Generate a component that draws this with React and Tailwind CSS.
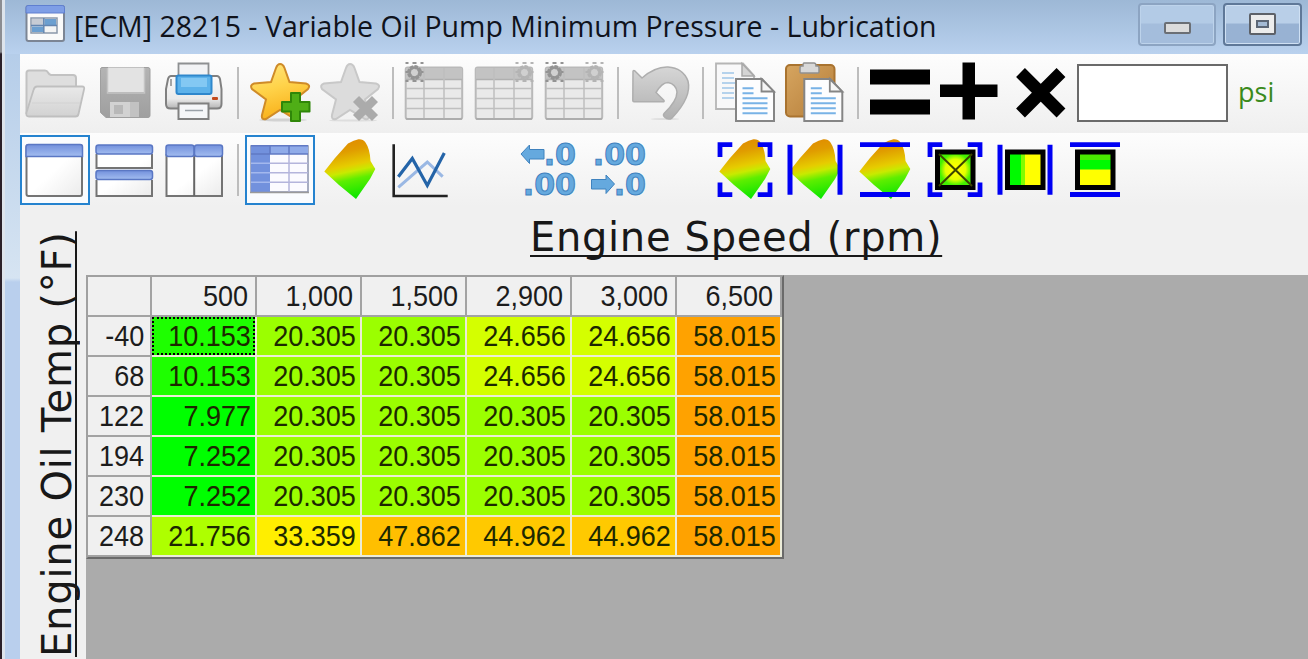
import React from "react";

const Icon = ({ children }) => (
  <svg className="block h-[70px] w-[70px] shrink-0" viewBox="0 0 70 70" fill="none">
    {children}
  </svg>
);

const Separator = () => (
  <div className="flex h-[70px] w-[15px] shrink-0 items-center justify-center">
    <div className="h-[52px] w-[2px] bg-[#bdbdbd]" />
  </div>
);

const Defs = () => (
  <svg className="absolute h-0 w-0">
    <defs>
      <linearGradient id="silver" x1="0" y1="0" x2="0" y2="1">
        <stop offset="0" stopColor="#e9e9e9" />
        <stop offset="1" stopColor="#d2d2d2" />
      </linearGradient>
      <linearGradient id="steel" x1="0" y1="0" x2="0" y2="1">
        <stop offset="0" stopColor="#b4b4b4" />
        <stop offset="1" stopColor="#9f9f9f" />
      </linearGradient>
      <linearGradient id="undo" x1="0" y1="0" x2="0" y2="1">
        <stop offset="0" stopColor="#d6d6d6" />
        <stop offset="1" stopColor="#b0b0b0" />
      </linearGradient>
      <linearGradient id="gold" x1="0" y1="0" x2="0.3" y2="1">
        <stop offset="0" stopColor="#ffe680" />
        <stop offset="0.5" stopColor="#ffd34a" />
        <stop offset="1" stopColor="#f9b21c" />
      </linearGradient>
      <linearGradient id="blueCap" x1="0" y1="0" x2="0" y2="1">
        <stop offset="0" stopColor="#7290dc" />
        <stop offset="1" stopColor="#a3bdf0" />
      </linearGradient>
      <linearGradient id="pane" x1="0" y1="0" x2="1" y2="1">
        <stop offset="0.5" stopColor="#ffffff" />
        <stop offset="1" stopColor="#ebebeb" />
      </linearGradient>
      <linearGradient id="printer" x1="0" y1="0" x2="0" y2="1">
        <stop offset="0" stopColor="#fafafa" />
        <stop offset="0.7" stopColor="#eaeaea" />
        <stop offset="1" stopColor="#b5b5b5" />
      </linearGradient>
      <linearGradient id="board" x1="0" y1="0" x2="1" y2="1">
        <stop offset="0" stopColor="#d6a560" />
        <stop offset="1" stopColor="#b57d38" />
      </linearGradient>
      <linearGradient id="surface" gradientUnits="userSpaceOnUse" x1="34" y1="3" x2="47" y2="64">
        <stop offset="0" stopColor="#e08a00" />
        <stop offset="0.2" stopColor="#e09c00" />
        <stop offset="0.43" stopColor="#e6cc00" />
        <stop offset="0.53" stopColor="#c8ea00" />
        <stop offset="0.66" stopColor="#5eee00" />
        <stop offset="1" stopColor="#00e400" />
      </linearGradient>
      <radialGradient id="target">
        <stop offset="0.15" stopColor="#ffff00" />
        <stop offset="0.55" stopColor="#e4ff00" />
        <stop offset="0.85" stopColor="#44f000" />
      </radialGradient>
    </defs>
  </svg>
);

const STAR =
  "M35 6 Q38 6 39.500 10 L44.500 24 L61 25.500 Q66 27 63 31 L50 41.500 L54 58 Q54 62 50 61 L35 52 L21 61 Q16 62 17 57 L21 41.500 L7 31 Q4.500 27 9 25.500 L26 24 L31 10 Q32.500 6 35 6Z";

const FolderIcon = () => (
  <Icon>
    <path d="M6.500 56V15q0-2.500 2.500-2.500h16q2 0 3 2t3 2.500h22q3 0 3 3v9" fill="#dedede" stroke="#c2c2c2" strokeWidth="2" />
    <path d="M17 28.500h45q3 0 2 3L58.500 56q-.5 2.500-3 2.500H9q-3.500 0-2.500-4L13.500 32q1-3.500 3.500-3.500Z" fill="url(#silver)" stroke="#bfbfbf" strokeWidth="1.800" />
    <path d="M12 45h48" stroke="#d2d2d2" strokeWidth="1" />
  </Icon>
);

const SaveIcon = () => (
  <Icon>
    <path d="M12 9.500h46q2 0 2 2v46q0 2-2 2H16l-5.500-5V11.500q0-2 1.500-2Z" fill="url(#steel)" stroke="#9f9f9f" strokeWidth="1" />
    <path d="M18 9.500h36V34H18Z" fill="#e3e3e3" />
    <path d="M17.500 10v25h37V10" stroke="#c4c4c4" strokeWidth="1.500" />
    <path d="M20 44h29v15H20Z" fill="#d2d2d2" />
    <path d="M24 47h9v9h-9Z" fill="#b8b8b8" />
    <path d="M40 44h9v15h-9Z" fill="#c2c2c2" />
  </Icon>
);

const PrintIcon = () => (
  <Icon>
    <path d="M18.500 22V5.500h30V22Z" fill="#f2f3f5" stroke="#8e9092" strokeWidth="1.800" />
    <path d="M11 18h46q2 0 3 3l1.500 10v15q0 4.500-4.500 4.500H10.500Q6 50.500 6 46V31l2-10q1-3 3-3Z" fill="url(#printer)" stroke="#808080" strokeWidth="2" />
    <rect x="16.500" y="17.500" width="35" height="18.500" rx="2" fill="#5db2ea" stroke="#2e87cc" strokeWidth="2" />
    <path d="M21 20h26v9H21Z" fill="#83c8f3" />
    <path d="M11 21v7" stroke="#a5a5a5" strokeWidth="2" />
    <rect x="52" y="39" width="6" height="3" rx="1" fill="#c34a1c" />
    <path d="M18.500 45.500h30V61h-30Z" fill="#f5f6f8" stroke="#808080" strokeWidth="2" />
    <path d="M25 52.500h18" stroke="#9aa1a8" strokeWidth="1.500" />
  </Icon>
);

const AddFavoriteIcon = () => (
  <Icon>
    <ellipse cx="38" cy="62" rx="24" ry="1.500" fill="#d2d2d2" />
    <path d={STAR} fill="url(#gold)" stroke="#cf8b28" strokeWidth="2" />
    <path d="M46 35h9v9h9.500v9.500H55V63h-9v-9.500h-9V44h9Z" fill="#4fae16" stroke="#2f8608" strokeWidth="2" strokeLinejoin="round" />
  </Icon>
);

const RemoveFavoriteIcon = () => (
  <Icon>
    <ellipse cx="38" cy="62.500" rx="24" ry="1" fill="#dedede" />
    <path d={STAR} fill="#dcdcdc" stroke="#c8c8c8" strokeWidth="2" />
    <path d="M41 41l19 19M60 41L41 60" stroke="#ababab" strokeWidth="8.500" />
  </Icon>
);

const Gear = ({ x, color }) => (
  <g>
    <path d={`M${x - 9} 5h3M${x - 2} 5h4M${x + 6} 5h3M${x - 9} 23h3M${x - 2} 23h4M${x + 6} 23h3M${x - 9} 14h3M${x + 6} 14h3`} stroke={color} strokeWidth="2" />
    <circle cx={x} cy="14.500" r="5.500" fill="#d0d0d0" stroke={color} strokeWidth="4" strokeDasharray="3.200 1" />
    <circle cx={x} cy="14.500" r="5" stroke={color} strokeWidth="2.500" />
  </g>
);

const TableIcon = ({ left, right }) => (
  <Icon>
    <rect x="5.700" y="9.500" width="56.500" height="51.500" rx="2" fill="#e9e9e9" stroke="#b9b9b9" strokeWidth="2" />
    <path d="M6 10h56v11.500H6Z" fill="#c3c3c3" />
    <path d="M6 21.500h56" stroke="#b0b0b0" strokeWidth="1.500" />
    <path d="M6 30.500h56M6 40.500h56M6 50.500h56M24 10v51M44 10v51" stroke="#bfbfbf" strokeWidth="1.500" />
    <path d="M6 61h56" stroke="#a9a9a9" strokeWidth="1.500" />
    {left && <Gear x={14.5} color="#939393" />}
    {right && <Gear x={54.5} color="#b4b4b4" />}
  </Icon>
);

const UndoIcon = () => (
  <Icon>
    <ellipse cx="40" cy="61" rx="14" ry="1" fill="#dedede" />
    <path
      d="M8 13.500Q8 12 10 13l7 7Q30 8.500 43 9q15 1 20 14 4 16-16 37-4 2.500-7.500-1-2-2 0-4Q52 43 52 34q-1-8-9-9.500-6 0-12 10l8 8q.5 1.200-1 1.200H9q-1.200 0-1.200-1.200Z"
      fill="url(#undo)" stroke="#aeaeae" strokeWidth="1.500"
    />
  </Icon>
);

const Page = ({ x }) => (
  <g transform={`translate(${x} 0)`}>
    <path d="M1 21h26l12 13v29H1Z" fill="#fdfdfe" stroke="#858585" strokeWidth="2" />
    <path d="M26.500 21v12.500H39Z" fill="#f6f6f6" stroke="#858585" strokeWidth="1.800" />
    <path d="M7.500 30.300h11M7.500 35.300h11M7.500 40.300h25M7.500 45.300h25M7.500 50.300h25M7.500 55.300h25" stroke="#78b2e6" strokeWidth="2" />
  </g>
);

const CopyIcon = () => (
  <Icon>
    <path d="M6 5.500h27l11 12V51H6Z" fill="#f8f8f9" stroke="#b5b5b5" strokeWidth="1.800" />
    <path d="M32 5.500V18h12Z" fill="#d4d4d4" stroke="#a8a8a8" strokeWidth="1.500" />
    <path d="M12 15h12M12 20h12M12 25h14M12 30h12M12 35h12M12 40h12" stroke="#b5d2ec" strokeWidth="2" />
    <Page x={25} />
  </Icon>
);

const PasteIcon = () => (
  <Icon>
    <rect x="6" y="7" width="48.500" height="51.500" rx="4" fill="url(#board)" stroke="#a9732f" strokeWidth="2" />
    <path d="M24 5h10q2 0 2 3h1.500q1.500 0 1.500 2v4q0 1-1 1H21q-1 0-1-1v-4q0-2 1.500-2H23q0-3 1-3Z" fill="#d8d8d8" stroke="#909090" strokeWidth="1.500" />
    <Page x={23.3} />
  </Icon>
);

const EqualsIcon = () => (
  <Icon>
    <path d="M5 11.500h60v15H5ZM5 41.500h60v15H5Z" fill="#000" />
  </Icon>
);

const PlusIcon = () => (
  <Icon>
    <path d="M27.500 4.500h12.500v22h22.500V39H40v22.500H27.500V39H5V26.500h22.500Z" fill="#000" />
  </Icon>
);

const TimesIcon = () => (
  <Icon>
    <path d="M15.500 14.500L56 55M56 14.500L15.500 55" stroke="#000" strokeWidth="12.500" />
  </Icon>
);

const SingleViewIcon = () => (
  <Icon>
    <rect x="6.500" y="10" width="55.500" height="51" rx="2" fill="url(#pane)" stroke="#747474" strokeWidth="2" />
    <path d="M6 21.500V12q0-2.500 2.500-2.500h51.500q2.500 0 2.500 2.500v9.500Z" fill="url(#blueCap)" stroke="#5a77c4" strokeWidth="1.500" />
  </Icon>
);

const RowsViewIcon = () => (
  <Icon>
    <path d="M6.500 19v14h55.500V19M6.500 45v16h55.500V45" fill="url(#pane)" stroke="#747474" strokeWidth="2" />
    <rect x="6" y="10" width="56.500" height="9" rx="2.500" fill="url(#blueCap)" stroke="#5a77c4" strokeWidth="1.500" />
    <rect x="6" y="35.500" width="56.500" height="9" rx="2.500" fill="url(#blueCap)" stroke="#5a77c4" strokeWidth="1.500" />
  </Icon>
);

const ColumnsViewIcon = () => (
  <Icon>
    <path d="M6.500 20v41h55.500V20Z" fill="url(#pane)" stroke="#747474" strokeWidth="2" />
    <path d="M34.200 20v41" stroke="#666" strokeWidth="2" />
    <rect x="6" y="10" width="28" height="11.500" rx="2.500" fill="url(#blueCap)" stroke="#5a77c4" strokeWidth="1.500" />
    <rect x="34.500" y="10" width="28" height="11.500" rx="2.500" fill="url(#blueCap)" stroke="#5a77c4" strokeWidth="1.500" />
  </Icon>
);

const GridViewIcon = () => (
  <Icon>
    <rect x="6" y="11" width="57" height="46" fill="#fbfbff" stroke="#8b93ad" strokeWidth="1.500" />
    <path d="M6 10.500h57v8.500H6Z" fill="#8fabe9" />
    <path d="M6 10.500h19V57H6Z" fill="#7291dd" />
    <path d="M25 28.300h38M25 37.700h38M25 47.300h38M44 19v38" stroke="#b4b5dc" strokeWidth="1.500" />
    <path d="M6 19h57M25 10.500V19M44 10.500V19M6 10.700h57" stroke="#6079c4" strokeWidth="1.500" />
    <path d="M6 28.300h19M6 37.700h19M6 47.300h19" stroke="#a3b8ee" strokeWidth="1.500" />
    <path d="M5 57.500h59" stroke="#9a9a9a" strokeWidth="1.500" />
  </Icon>
);

const Surface = () => (
  <path d="M9.300 36.500L20 23L33 8.500Q39 5 43.500 4.300Q48 4 50.500 7.500Q55 14 55.500 26L60.300 34L55 44L41 64L24 50Z" fill="url(#surface)" />
);

const BLUE = "#0000f4";
const Corners = () => <path d="M22.300 9.700H10V22M47.700 9.700H60V22M10 47.500V59.700H22.300M60 47.500V59.700H47.700" stroke={BLUE} strokeWidth="4.800" />;
const SideBars = () => <path d="M10 9.700v50M60 9.700v50" stroke={BLUE} strokeWidth="5" />;
const EdgeBars = () => <path d="M10 9.700h50M10 59.500h50" stroke={BLUE} strokeWidth="4.800" />;
const Box = () => <rect x="17.500" y="17" width="35.500" height="35.500" stroke="#000" strokeWidth="5" />;

const SurfaceIcon = ({ children }) => (
  <Icon>
    <Surface />
    {children}
  </Icon>
);

const ChartIcon = () => (
  <Icon>
    <path d="M13.300 52.300L42.300 27L57.700 41.700" stroke="#9ab8e4" strokeWidth="3" />
    <path d="M13.300 41.700L27.300 23.500L42.300 50.500L59.300 18" stroke="#2464a8" strokeWidth="3.200" />
    <path d="M8.700 9.300V61H62.700" stroke="#222" strokeWidth="2.600" />
  </Icon>
);

const Digits = ({ y, children }) => (
  <text x="61" y={y} textAnchor="end" fontFamily="DejaVu Sans" fontWeight="bold" fontSize="30" fill="#65a9de" stroke="#3f82be" strokeWidth="1">
    {children}
  </text>
);

const MoreDecimalsIcon = () => (
  <Icon>
    <path d="M6 19L14.500 10v4.500H29v9.500H14.500v4.500Z" fill="#65a9de" stroke="#3f82be" />
    <Digits y="30">.0</Digits>
    <Digits y="60">.00</Digits>
  </Icon>
);

const FewerDecimalsIcon = () => (
  <Icon>
    <path d="M29.500 49L21 40v4.500H6.500V54H21v4.500Z" fill="#65a9de" stroke="#3f82be" />
    <Digits y="30">.00</Digits>
    <Digits y="60">.0</Digits>
  </Icon>
);

const ScaleAllIcon = () => (
  <Icon>
    <Corners />
    <rect x="17" y="16" width="37" height="37" fill="#44f000" />
    <rect x="17" y="16" width="37" height="37" fill="url(#target)" />
    <Box />
    <path d="M19 19l33 32M52 19L19 51" stroke="#3c4400" strokeWidth="2" />
  </Icon>
);

const ScaleColumnsIcon = () => (
  <Icon>
    <SideBars />
    <path d="M17 17h17.500v36H17Z" fill="#00fa00" />
    <path d="M31 17h4v36h-4Z" fill="#80fc00" />
    <path d="M35 17h19v36H35Z" fill="#ffff00" />
    <Box />
  </Icon>
);

const ScaleRowsIcon = () => (
  <Icon>
    <EdgeBars />
    <path d="M17 17h36v18H17Z" fill="#00fa00" />
    <path d="M17 17h36v8H17Z" fill="#48e800" />
    <path d="M17 34.500h36V53H17Z" fill="#ffff00" />
    <Box />
  </Icon>
);

const Selected = ({ children }) => (
  <div className="relative h-[70px] w-[70px] shrink-0 bg-[#fafcfe] outline-2 -outline-offset-2 outline-[#2583cf]">{children}</div>
);

const TitleBar = () => (
  <header className="flex h-[54px] shrink-0 items-start bg-linear-to-b from-[#9db8d6] to-[#b9d1ee] pl-[19px]">
    <svg className="mt-[4px] block h-[39px] w-[42px] shrink-0" viewBox="0 0 42 39" fill="none">
      <rect x="2.500" y="2" width="37.500" height="35" rx="2" fill="#fafafa" stroke="#7c8594" strokeWidth="2" />
      <path d="M2 9V3.500Q2 1.500 4 1.500h34.500q2 0 2 2V9Z" fill="#7e9ee6" stroke="#5f7fd0" />
      <rect x="7" y="14" width="26" height="15" fill="#f4f4f4" stroke="#8b98aa" strokeWidth="1.500" />
      <path d="M8 15h11v6H8Z" fill="#c6cbd4" />
      <path d="M20.500 15H32v6H20.500ZM8 22.500h11V28H8Z" fill="#6c9fd0" />
      <path d="M19.800 14v15M7 21.500h26" stroke="#6485b0" strokeWidth="1.500" />
    </svg>
    <h1 className="ml-[8px] font-['Open_Sans',sans-serif] text-[28.5px] leading-[52px] whitespace-nowrap text-[#10131c]">
      [ECM] 28215 - Variable Oil Pump Minimum Pressure - Lubrication
    </h1>
    <div className="mt-[3px] ml-auto flex shrink-0 gap-[7px]">
      <button className="flex h-[43px] w-[78px] items-center justify-center rounded-[4px] border-2 border-[#8ca4c2] bg-linear-to-b from-[#b3cbe6] from-45% to-[#a4bddc] to-50% shadow-[inset_0_0_0_1px_#bdd3eb]">
        <span className="mt-[7px] h-[12px] w-[27px] rounded-[2px] border-2 border-[#6b6f75] bg-[#dcdcdc]" />
      </button>
      <button className="flex h-[43px] w-[79px] items-center justify-center rounded-[4px] border-2 border-[#5f7898] bg-linear-to-b from-[#b9cfe8] from-45% to-[#98b2d3] to-50% shadow-[inset_0_0_0_1px_#cfe0f3]">
        <span className="-mt-[2px] flex h-[22px] w-[27px] items-center justify-center rounded-[2px] border-2 border-[#5d6168] bg-[#ececec]">
          <span className="h-[8px] w-[13px] border-2 border-[#5c6675] bg-[#a4bad4]" />
        </span>
      </button>
      <div className="-ml-[1px] h-[43px] w-[1px] bg-[#6a4558]" />
    </div>
  </header>
);

const FileToolbar = () => (
  <div className="flex h-[79px] shrink-0 items-start bg-linear-to-b from-[#fdfdfd] to-[#efefef] pt-[4px]">
    <FolderIcon />
    <SaveIcon />
    <PrintIcon />
    <Separator />
    <AddFavoriteIcon />
    <RemoveFavoriteIcon />
    <Separator />
    <TableIcon left />
    <TableIcon right />
    <TableIcon left right />
    <Separator />
    <UndoIcon />
    <Separator />
    <CopyIcon />
    <PasteIcon />
    <Separator />
    <EqualsIcon />
    <PlusIcon />
    <TimesIcon />
    <input className="mt-[6px] ml-[2px] h-[58px] w-[151px] shrink-0 border-2 border-[#6a6a6a] bg-white" />
    <span className="ml-[10px] font-['Open_Sans',sans-serif] text-[27px] leading-[67px] text-[#3a8a1c]">psi</span>
  </div>
);

const ViewToolbar = () => (
  <div className="flex h-[73px] shrink-0 items-start bg-linear-to-b from-[#fdfdfd] to-[#f0f0f0] pt-[2px]">
    <Selected><SingleViewIcon /></Selected>
    <RowsViewIcon />
    <ColumnsViewIcon />
    <Separator />
    <Selected><GridViewIcon /></Selected>
    <SurfaceIcon />
    <ChartIcon />
    <div className="ml-[60px] flex">
      <MoreDecimalsIcon />
      <FewerDecimalsIcon />
    </div>
    <div className="ml-[55px] flex">
      <SurfaceIcon><Corners /></SurfaceIcon>
      <SurfaceIcon><SideBars /></SurfaceIcon>
      <SurfaceIcon><EdgeBars /></SurfaceIcon>
      <ScaleAllIcon />
      <ScaleColumnsIcon />
      <ScaleRowsIcon />
    </div>
  </div>
);

const speeds = ["500", "1,000", "1,500", "2,900", "3,000", "6,500"];

const G1 = "bg-[#1eff00]";
const G0 = "bg-[#00ff00]";
const L = "bg-[#9bff00]";
const Y = "bg-[#d4ff00]";
const O = "bg-[#ffa200]";

const rows = [
  { temp: "-40", cells: [["10.153", G1], ["20.305", L], ["20.305", L], ["24.656", Y], ["24.656", Y], ["58.015", O]] },
  { temp: "68", cells: [["10.153", G1], ["20.305", L], ["20.305", L], ["24.656", Y], ["24.656", Y], ["58.015", O]] },
  { temp: "122", cells: [["7.977", G0], ["20.305", L], ["20.305", L], ["20.305", L], ["20.305", L], ["58.015", O]] },
  { temp: "194", cells: [["7.252", G0], ["20.305", L], ["20.305", L], ["20.305", L], ["20.305", L], ["58.015", O]] },
  { temp: "230", cells: [["7.252", G0], ["20.305", L], ["20.305", L], ["20.305", L], ["20.305", L], ["58.015", O]] },
  { temp: "248", cells: [["21.756", "bg-[#aeff00]"], ["33.359", "bg-[#ffee00]"], ["47.862", "bg-[#ffbf00]"], ["44.962", "bg-[#ffc900]"], ["44.962", "bg-[#ffc900]"], ["58.015", O]] },
];

const Value = ({ children }) => <span className="inline-block origin-right scale-x-[0.900]">{children}</span>;

const PressureTable = () => (
  <div className="w-[698px] border-t-2 border-r-2 border-b-2 border-l-2 border-t-[#a0a0a0] border-r-[#6a6a6a] border-b-[#6a6a6a] border-l-[#a0a0a0] font-['Liberation_Sans',sans-serif] text-[30px] leading-[37px] text-[#1c1c1c]">
    <div className="grid grid-cols-[64px_repeat(6,105px)]">
      <div className="h-[40px] border-r-2 border-b-2 border-[#a3a3a3] bg-[#f0f0f0]" />
      {speeds.map((s) => (
        <div key={s} className="h-[40px] border-r-2 border-b-2 border-[#a3a3a3] bg-[#f0f0f0] pr-[7px] text-right">
          <Value>{s}</Value>
        </div>
      ))}
      {rows.map((row, r) => (
        <React.Fragment key={row.temp}>
          <div className="h-[40px] border-r-2 border-b-2 border-[#a3a3a3] bg-[#f0f0f0] pr-[6px] text-right">
            <Value>{row.temp}</Value>
          </div>
          {row.cells.map(([value, color], c) => (
            <div key={c} className={`relative h-[40px] border-r-2 border-b-2 border-[#ececd8] bg-clip-padding pr-[4px] text-right text-[#1c2800] ${color}`}>
              <Value>{value}</Value>
              {r === 0 && c === 0 && <div className="absolute inset-0 border-2 border-dotted border-black" />}
            </div>
          ))}
        </React.Fragment>
      ))}
    </div>
  </div>
);

export default function App() {
  return (
    <div className="relative flex h-[659px] w-[1308px] flex-col overflow-hidden bg-[#f0f0f0]">
      <Defs />
      <div className="flex min-h-0 flex-1">
        <div className="flex w-[5px] shrink-0">
          <div className="w-[2px] bg-linear-to-b from-[#8b8d92] from-[52px] to-[#2a2029] to-[54px]" />
          <div className="w-[3px] bg-[#dde4ec]" />
        </div>
        <div className="flex min-w-0 flex-1 flex-col">
          <div className="-mr-px">
            <TitleBar />
          </div>
          <div className="flex min-h-0 flex-1">
            <div className="w-[15px] shrink-0 bg-linear-to-b from-[#b5cde9] via-[#d6e4f2] via-[224px] to-[#b9cfed] to-[228px]" />
            <div className="flex min-w-0 flex-1 flex-col">
              <FileToolbar />
              <ViewToolbar />
              <div className="flex min-h-0 flex-1">
                <div className="flex w-[66px] shrink-0 items-start justify-end">
                  <div className="mt-[26px] mr-[4px] h-[425px] rotate-180 font-['DejaVu_Sans',sans-serif] text-[40px] leading-[50px] tracking-[0.800px] whitespace-nowrap text-[#181818] underline decoration-[2px] underline-offset-[-3px] [text-decoration-skip-ink:none] [writing-mode:vertical-rl]">
                    Engine Oil Temp (°F)
                  </div>
                </div>
                <div className="flex min-w-0 flex-1 flex-col">
                  <h2 className="flex h-[69px] shrink-0 items-start pl-[444px] font-['DejaVu_Sans',sans-serif] text-[40px] leading-[63px] tracking-[0.680px] whitespace-nowrap text-[#181818]">
                    <span className="underline decoration-[2px] underline-offset-[4px] [text-decoration-skip-ink:none]">Engine Speed (rpm)</span>
                  </h2>
                  <div className="min-h-0 flex-1 bg-[#ababab]">
                    <PressureTable />
                  </div>
                </div>
              </div>
            </div>
          </div>
        </div>
      </div>
    </div>
  );
}
